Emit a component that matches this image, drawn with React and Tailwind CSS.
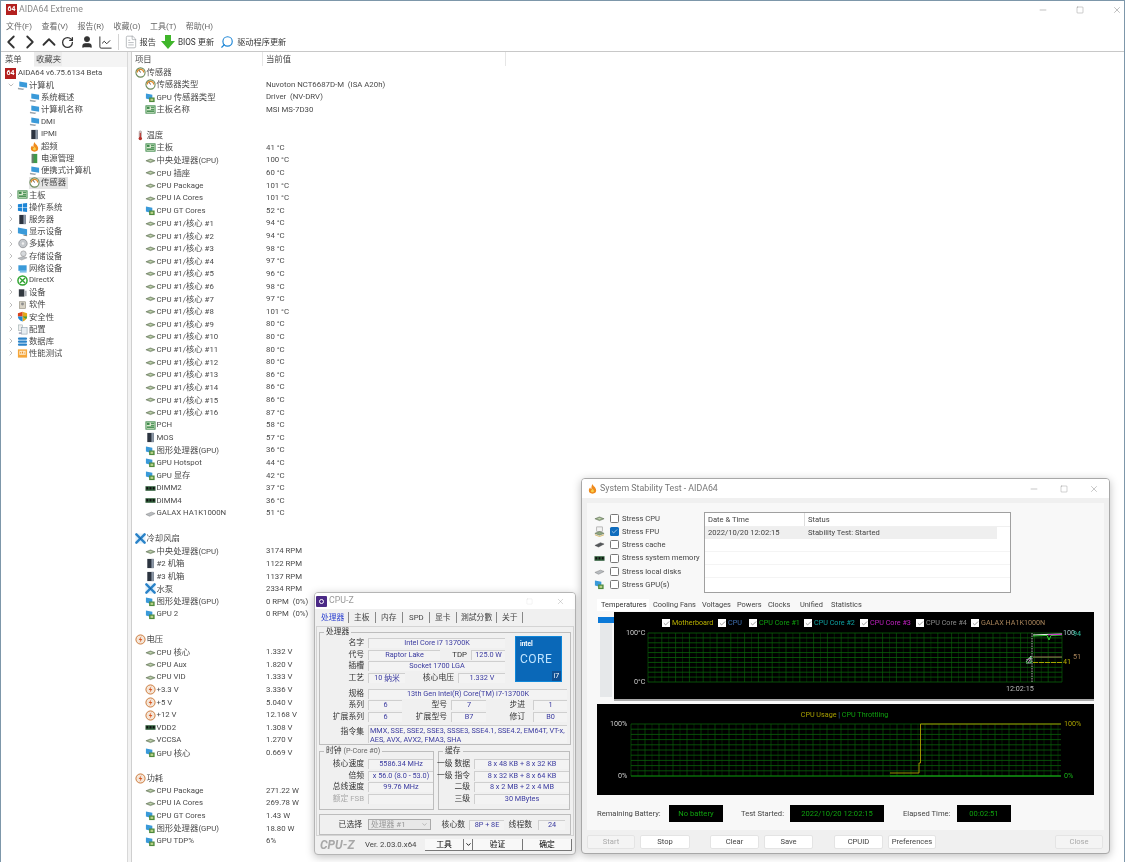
import React from "react";
import { ChevronLeft, ChevronRight, ChevronUp, ChevronDown, RotateCw, User, ChartLine, Minus, Square, X, Check, FileText, Search } from "lucide-react";

// small app icons
const Svg = ({ children }) => (
  <svg viewBox="0 0 12 12" className="w-[11px] h-[11px] shrink-0">
    {children}
  </svg>
);
const Gauge = () => (
  <Svg>
    <circle cx="6" cy="6" r="5" fill="#fff" stroke="#6b8a5a" strokeWidth="1.2" />
    <path d="M2.5 6a3.5 3.5 0 0 1 7 0" fill="none" stroke="#e08a2a" strokeWidth="1.4" />
    <path d="M6 6L4.5 3.5" stroke="#444" strokeWidth="1" />
  </Svg>
);
const Cpu = () => (
  <Svg>
    <path d="M1 6.3L6 4.3L11 6.3L6 8.3Z" fill="#8fa77f" stroke="#5b6b52" strokeWidth="0.6" />
    <path d="M3.5 6.3L6 5.4L8.5 6.3L6 7.2Z" fill="#c9d8b8" />
  </Svg>
);
const Fpu = () => (
  <Svg>
    <rect x="3" y="1" width="6" height="5" fill="#f2f2f2" stroke="#8a8a8a" strokeWidth="0.6" />
    <path d="M1 8L6 6L11 8L6 10Z" fill="#8fa77f" stroke="#5b6b52" strokeWidth="0.6" />
    <path d="M1 9.5L6 11.500L11 9.5" fill="none" stroke="#c9a43a" strokeWidth="0.8" />
  </Svg>
);
const Cache = () => (
  <Svg>
    <path d="M1 7L7 4L11 5.5L5 8.8Z" fill="#55595c" stroke="#333" strokeWidth="0.4" />
  </Svg>
);
const Gpu = () => (
  <Svg>
    <path d="M1 1.5L8 3V9L1 7Z" fill="#3a9ad9" />
    <rect x="4.5" y="6" width="6" height="5" fill="#4f8a3c" />
    <rect x="6" y="7.3" width="3" height="2.4" fill="#b9d28a" />
  </Svg>
);
const Board = () => (
  <Svg>
    <rect x="1" y="2" width="10" height="8" fill="#dcebd2" stroke="#3d8a4a" />
    <rect x="2" y="3" width="3" height="2.4" fill="#3d8a4a" />
    <rect x="6.5" y="3" width="3.5" height="1.2" fill="#3d8a4a" />
    <rect x="6.5" y="5.2" width="3.5" height="1.2" fill="#3d8a4a" />
    <rect x="2" y="7" width="8" height="1.6" fill="#3d8a4a" />
  </Svg>
);
const Thermo = () => (
  <Svg>
    <rect x="4.6" y="1" width="2.4" height="7" rx="1" fill="#d9d9d9" stroke="#8a5a5a" strokeWidth="0.5" />
    <rect x="5.2" y="3" width="1.2" height="6" fill="#b5302a" />
    <circle cx="5.8" cy="9.2" r="1.9" fill="#b5302a" />
  </Svg>
);
const Fan = () => (
  <Svg>
    <rect x="0.5" y="0.5" width="11" height="11" rx="1.5" fill="#e3f1fb" />
    <path d="M1.5 1.5L5 5M10.5 1.5L7 5M1.5 10.5L5 7M10.5 10.5L7 7" stroke="#2a83c9" strokeWidth="2.6" strokeLinecap="round" />
    <circle cx="6" cy="6" r="1" fill="#1b5f99" />
  </Svg>
);
const Volt = () => (
  <Svg>
    <circle cx="6" cy="6" r="5" fill="#f4e6d8" stroke="#c9722e" />
    <path d="M7 2.5L4 6.5H6L5 9.5L8 5.5H6Z" fill="#d9541e" />
  </Svg>
);
const Tower = () => (
  <Svg>
    <rect x="2.5" y="1" width="7" height="10" fill="#2c3440" />
    <rect x="7" y="1" width="2.5" height="10" fill="#8d99a8" />
  </Svg>
);
const Dimm = () => (
  <Svg>
    <rect x="0.5" y="3.5" width="11" height="5" fill="#2f5d3a" />
    <rect x="1.5" y="4.5" width="2" height="2.5" fill="#111" />
    <rect x="5" y="4.5" width="2" height="2.5" fill="#111" />
    <rect x="8.5" y="4.5" width="2" height="2.5" fill="#111" />
  </Svg>
);
const Hdd = () => (
  <Svg>
    <path d="M1 7L7 4.5L11 6L5 9Z" fill="#b8bcc0" stroke="#777" strokeWidth="0.5" />
  </Svg>
);
const Pc = () => (
  <Svg>
    <path d="M2.5 1.5L11 3V8.5L2.5 7Z" fill="#3a9ad9" />
    <path d="M1 8.5L8 9.5L6.5 11L1 10Z" fill="#9aa3ab" />
  </Svg>
);
const Flame = () => (
  <Svg>
    <path d="M6 1C6.5 3.5 10 4.5 10 8A4 3.6 0 0 1 2 8C2 6.5 2.8 5.5 3.5 4.8C3.8 6 4.4 6.4 5 6.4C4.6 4.6 5 2.6 6 1Z" fill="#ef8a1d" />
    <path d="M6 6C6.4 7.2 7.6 7.6 7.6 9A1.7 1.6 0 0 1 4.3 9C4.3 8 5.6 7.4 6 6Z" fill="#f7d14a" />
  </Svg>
);
const Power = () => (
  <Svg>
    <rect x="3" y="1" width="6" height="10" fill="#3f9a4a" />
    <rect x="3" y="1" width="2" height="10" fill="#6d7a70" />
  </Svg>
);
const Win = () => (
  <Svg>
    <path d="M1 2.5L5.5 1.8V5.7H1ZM6.3 1.7L11 1V5.7H6.3ZM1 6.4H5.5V10.3L1 9.6ZM6.3 6.4H11V11L6.3 10.3Z" fill="#1e86d6" />
  </Svg>
);
const Mon = () => (
  <Svg>
    <path d="M1 1.5L11 3.5V10L1 8Z" fill="#3a9ad9" />
    <path d="M7 10L11 10.6" stroke="#777" />
  </Svg>
);
const Media = () => (
  <Svg>
    <circle cx="6.5" cy="6" r="4.6" fill="#c4c8cc" stroke="#7b7f84" strokeWidth="0.7" />
    <circle cx="6.5" cy="6" r="1.3" fill="#f0f0f0" />
  </Svg>
);
const Store = () => (
  <Svg>
    <circle cx="7" cy="4" r="3" fill="#d6d9dc" stroke="#888" strokeWidth="0.6" />
    <path d="M1 9L7 7L11 8.5L5 11Z" fill="#b8bcc0" stroke="#777" strokeWidth="0.4" />
  </Svg>
);
const Net = () => (
  <Svg>
    <rect x="1.5" y="2.5" width="9" height="6" fill="#3a9ad9" />
    <rect x="3" y="8.5" width="7.5" height="2" fill="#7ec1e8" />
  </Svg>
);
const Xbox = () => (
  <Svg>
    <circle cx="6" cy="6" r="5" fill="#fff" stroke="#2fa32f" strokeWidth="1.6" />
    <path d="M3.2 3.2L8.8 8.8M8.8 3.2L3.2 8.8" stroke="#2fa32f" strokeWidth="1.5" />
  </Svg>
);
const Device = () => (
  <Svg>
    <rect x="2" y="2.5" width="6" height="8" fill="#333a40" />
    <rect x="8" y="4" width="2.5" height="6" fill="#a9aeb3" />
  </Svg>
);
const Soft = () => (
  <Svg>
    <rect x="2.5" y="3" width="7" height="7.5" fill="#d8d3c6" stroke="#8b8778" strokeWidth="0.6" />
    <circle cx="6" cy="5.5" r="1.6" fill="#8f8f8f" />
  </Svg>
);
const Shield = () => (
  <Svg>
    <path d="M6 0.8L11 2.5V6C11 8.6 9 10.5 6 11.5Z" fill="#e2a81c" />
    <path d="M6 0.8L1 2.5V6H6Z" fill="#d9431e" />
    <path d="M1 6C1 8.6 3 10.5 6 11.5V6Z" fill="#1e86d6" />
    <path d="M6 6H11C11 7 10.6 8 10 8.8L6 6Z" fill="#3ea13e" />
  </Svg>
);
const Conf = () => (
  <Svg>
    <rect x="1.5" y="1" width="4.5" height="6" fill="#eee" stroke="#9aa" strokeWidth="0.6" />
    <rect x="5" y="4" width="6" height="7" fill="#e8eef2" stroke="#8a9aa5" strokeWidth="0.6" />
    <path d="M2 9h3v2H2z" fill="#aab" />
  </Svg>
);
const Db = () => (
  <Svg>
    <rect x="1" y="1.5" width="10" height="2.6" rx="1.2" fill="#2a83c9" />
    <rect x="1" y="4.8" width="10" height="2.6" rx="1.2" fill="#2a83c9" />
    <rect x="1" y="8.1" width="10" height="2.6" rx="1.2" fill="#2a83c9" />
  </Svg>
);
const Bench = () => (
  <Svg>
    <rect x="1" y="1.5" width="10" height="9" fill="#f5a63a" />
    <rect x="2.5" y="3" width="7" height="4.5" fill="#fde6c2" />
    <path d="M4 6V4.5M6 6V4M8 6V5" stroke="#e2851a" />
  </Svg>
);
const Logo64 = ({ cls }) => (
  <div className={"flex items-center justify-center bg-[#b3201f] text-white font-bold shrink-0 " + cls}>64</div>
);

// latin runs are narrower than the CJK ones in the original font
const T = ({ s }) =>
  s.split(/([\u4e00-\u9fff]+)/).map((part, i) =>
    /[\u4e00-\u9fff]/.test(part) ? (
      <span key={i} className="text-[8.4px]">{part}</span>
    ) : (
      <span key={i}>{part}</span>
    )
  );

const tree = [
  { d: 1, open: true, I: Pc, t: "计算机" },
  { d: 2, I: Pc, t: "系统概述" },
  { d: 2, I: Pc, t: "计算机名称" },
  { d: 2, I: Pc, t: "DMI" },
  { d: 2, I: Tower, t: "IPMI" },
  { d: 2, I: Flame, t: "超频" },
  { d: 2, I: Power, t: "电源管理" },
  { d: 2, I: Pc, t: "便携式计算机" },
  { d: 2, I: Gauge, t: "传感器", sel: true },
  { d: 1, I: Board, t: "主板" },
  { d: 1, I: Win, t: "操作系统" },
  { d: 1, I: Tower, t: "服务器" },
  { d: 1, I: Mon, t: "显示设备" },
  { d: 1, I: Media, t: "多媒体" },
  { d: 1, I: Store, t: "存储设备" },
  { d: 1, I: Net, t: "网络设备" },
  { d: 1, I: Xbox, t: "DirectX" },
  { d: 1, I: Device, t: "设备" },
  { d: 1, I: Soft, t: "软件" },
  { d: 1, I: Shield, t: "安全性" },
  { d: 1, I: Conf, t: "配置" },
  { d: 1, I: Db, t: "数据库" },
  { d: 1, I: Bench, t: "性能测试" },
];

const coreTemps = [94, 94, 98, 97, 96, 98, 97, 101, 80, 80, 80, 80, 86, 86, 86, 87];

const rows = [
  { head: true, I: Gauge, t: "传感器" },
  { I: Gauge, t: "传感器类型", v: "Nuvoton NCT6687D-M  (ISA A20h)" },
  { I: Gpu, t: "GPU 传感器类型", v: "Driver  (NV-DRV)" },
  { I: Board, t: "主板名称", v: "MSI MS-7D30" },
  null,
  { head: true, I: Thermo, t: "温度" },
  { I: Board, t: "主板", v: "41 °C" },
  { I: Cpu, t: "中央处理器(CPU)", v: "100 °C" },
  { I: Cpu, t: "CPU 插座", v: "60 °C" },
  { I: Cpu, t: "CPU Package", v: "101 °C" },
  { I: Cpu, t: "CPU IA Cores", v: "101 °C" },
  { I: Gpu, t: "CPU GT Cores", v: "52 °C" },
  ...coreTemps.map((c, i) => ({ I: Cpu, t: `CPU #1/核心 #${i + 1}`, v: `${c} °C` })),
  { I: Board, t: "PCH", v: "58 °C" },
  { I: Tower, t: "MOS", v: "57 °C" },
  { I: Gpu, t: "图形处理器(GPU)", v: "36 °C" },
  { I: Gpu, t: "GPU Hotspot", v: "44 °C" },
  { I: Gpu, t: "GPU 显存", v: "42 °C" },
  { I: Dimm, t: "DIMM2", v: "37 °C" },
  { I: Dimm, t: "DIMM4", v: "36 °C" },
  { I: Hdd, t: "GALAX HA1K1000N", v: "51 °C" },
  null,
  { head: true, I: Fan, t: "冷却风扇" },
  { I: Cpu, t: "中央处理器(CPU)", v: "3174 RPM" },
  { I: Tower, t: "#2 机箱", v: "1122 RPM" },
  { I: Tower, t: "#3 机箱", v: "1137 RPM" },
  { I: Fan, t: "水泵", v: "2334 RPM" },
  { I: Gpu, t: "图形处理器(GPU)", v: "0 RPM  (0%)" },
  { I: Gpu, t: "GPU 2", v: "0 RPM  (0%)" },
  null,
  { head: true, I: Volt, t: "电压" },
  { I: Cpu, t: "CPU 核心", v: "1.332 V" },
  { I: Cpu, t: "CPU Aux", v: "1.820 V" },
  { I: Cpu, t: "CPU VID", v: "1.333 V" },
  { I: Volt, t: "+3.3 V", v: "3.336 V" },
  { I: Volt, t: "+5 V", v: "5.040 V" },
  { I: Volt, t: "+12 V", v: "12.168 V" },
  { I: Dimm, t: "VDD2", v: "1.308 V" },
  { I: Cpu, t: "VCCSA", v: "1.270 V" },
  { I: Gpu, t: "GPU 核心", v: "0.669 V" },
  null,
  { head: true, I: Volt, t: "功耗" },
  { I: Cpu, t: "CPU Package", v: "271.22 W" },
  { I: Cpu, t: "CPU IA Cores", v: "269.78 W" },
  { I: Gpu, t: "CPU GT Cores", v: "1.43 W" },
  { I: Gpu, t: "图形处理器(GPU)", v: "18.80 W" },
  { I: Gpu, t: "GPU TDP%", v: "6%" },
];

function MainWindow() {
  return (
    <div className="w-full h-full flex flex-col border-l border-t border-r border-[#7d97aa] bg-white text-[#4a4a4a]">
      <div className="h-[17px] flex items-center shrink-0 pl-[5px]">
        <Logo64 cls="w-[11px] h-[11px] text-[7px]" />
        <span className="ml-[2px] text-[#8a8a8a] text-[8.8px]">AIDA64 Extreme</span>
        <div className="ml-auto flex items-center gap-[28px] mr-[2px] text-[#666]">
          <Minus size={10} strokeWidth={1} />
          <Square size={8} strokeWidth={1} />
          <X size={10} strokeWidth={1} />
        </div>
      </div>
      <div className="h-[15px] flex items-center shrink-0 pl-[5px] gap-[9.5px] text-[#666] text-[8px] pt-[3px]">
        <span>文件(F)</span>
        <span>查看(V)</span>
        <span>报告(R)</span>
        <span>收藏(O)</span>
        <span>工具(T)</span>
        <span>帮助(H)</span>
      </div>
      <div className="h-[19px] flex items-center shrink-0 border-b border-[#c8c8c8] text-[#333]">
        <ChevronLeft size={22} strokeWidth={2} className="-ml-[1px] -mr-[3px] shrink-0" />
        <ChevronRight size={22} strokeWidth={2} className="-mr-[3px] shrink-0" />
        <ChevronUp size={22} strokeWidth={2} className="-mr-[3px] shrink-0" />
        <RotateCw size={13} strokeWidth={2.4} className="ml-[3.5px] shrink-0" />
        <User size={14} strokeWidth={2} fill="#333" className="ml-[6px] shrink-0" />
        <ChartLine size={15} strokeWidth={1.6} className="ml-[4px] shrink-0" />
        <div className="w-px h-[16px] bg-[#d4d4d4] ml-[5px]" />
        <FileText size={14} strokeWidth={1} className="text-[#8a8f94] ml-[5px] shrink-0" />
        <span className="text-[8.2px] ml-[2px]">报告</span>
        <svg viewBox="0 0 14 14" className="w-[14px] h-[14px] ml-[5px] shrink-0">
          <path d="M4 0H10V6H14L7 14L0 6H4Z" fill="#3fb52a" />
        </svg>
        <span className="text-[8.2px] ml-[3px]">BIOS 更新</span>
        <Search size={14} strokeWidth={2} className="text-[#1e86d6] -scale-x-100 ml-[6px] shrink-0" />
        <span className="text-[8.2px] ml-[3px]">驱动程序更新</span>
      </div>
      <div className="flex-1 flex min-h-0">
        <div className="w-[127px] shrink-0 border-r border-[#d8d8d8] flex flex-col text-[7.8px]">
          <div className="h-[15px] flex items-end bg-[#f4f4f4] shrink-0 text-[8.4px]">
            <div className="h-[15px] w-[33px] bg-white flex items-center pl-[4px]">菜单</div>
            <div className="h-[14px] w-[28px] mb-[1px] bg-[#ececec] flex items-center pl-[2px]">收藏夹</div>
          </div>
          <div className="h-[12.2px] flex items-center pl-[4px]">
            <Logo64 cls="w-[11px] h-[11px] text-[7px]" />
            <span className="ml-[2px]">AIDA64 v6.75.6134 Beta</span>
          </div>
          {tree.map((n, i) => (
            <div key={i} className="h-[12.2px] flex items-center">
              {n.d === 1 ? (
                <div className="w-[16px] flex justify-end pr-[2px] text-[#9a9a9a]">
                  {n.open ? <ChevronDown size={8} /> : <ChevronRight size={8} />}
                </div>
              ) : (
                <div className="w-[28px]" />
              )}
              <div className={n.sel ? "flex items-center bg-[#e4e4e4] pr-[2px] h-[12px]" : "flex items-center"}>
                <n.I />
                <span className="ml-[1px]"><T s={n.t} /></span>
              </div>
            </div>
          ))}
        </div>
        <div className="w-[3px] bg-[#f2f2f2] shrink-0" />
        <div className="flex-1 border-l border-[#cfcfcf] text-[7.8px] min-w-0">
          <div className="h-[13.7px] flex items-center text-[8.4px]">
            <div className="w-[131px] pl-[3px] border-r border-[#e6e6e6] h-full flex items-center">项目</div>
            <div className="w-[243px] pl-[3px] border-r border-[#e6e6e6] h-full flex items-center">当前值</div>
          </div>
          {rows.map((r, i) =>
            r === null ? (
              <div key={i} className="h-[12.61px]" />
            ) : (
              <div key={i} className="h-[12.61px] flex items-center">
                <div className={r.head ? "w-[134px] shrink-0 flex items-center pl-[3px]" : "w-[134px] shrink-0 flex items-center pl-[13px]"}>
                  <r.I />
                  <span className="ml-[0.5px]"><T s={r.t} /></span>
                </div>
                <span className="whitespace-pre">{r.v}</span>
              </div>
            )
          )}
        </div>
      </div>
    </div>
  );
}

// CPU-Z parts
const Lbl = ({ className, children }) => (
  <div className={"flex justify-end whitespace-nowrap shrink-0 text-[#333] " + className}>{children}</div>
);
const Fld = ({ className, children }) => (
  <div className={"ml-[4px] h-[10px] shrink-0 flex items-center justify-center whitespace-nowrap bg-[#f3f3f3] border-t border-l border-[#cfcfcf] text-[#3b3ba0] text-[7.3px] " + className}>
    {children}
  </div>
);
const Group = ({ className, label, children }) => (
  <div className={"relative border border-[#bdbdbd] " + className}>
    <div className="absolute -top-[6px] left-[4px] bg-[#f0f0f0] px-[2px] text-[#333] leading-[10px]">{label}</div>
    {children}
  </div>
);
const R = ({ children }) => <div className="flex items-center h-[11.7px]">{children}</div>;

function CpuZ() {
  return (
    <div className="absolute left-[314px] top-[592px] w-[262px] h-[263px] rounded-[4px] border border-[#b5b5b5] bg-[#f0f0f0] shadow-[0_2px_8px_rgba(0,0,0,0.25)] flex flex-col text-[7.8px] overflow-hidden">
      <div className="h-[16px] bg-white flex items-center pl-[1px] shrink-0">
        <div className="w-[11px] h-[11px] bg-[#4b2a86] rounded-[1px] flex items-center justify-center">
          <div className="w-[5px] h-[5px] rounded-full border border-white" />
        </div>
        <span className="ml-[2px] text-[#9a9a9a] text-[8.8px]">CPU-Z</span>
        <div className="ml-auto flex items-center gap-[23px] mr-[10px] text-[#9a9a9a]">
          <Square size={7} strokeWidth={0.8} className="text-[#d0d0d0]" />
          <X size={9} strokeWidth={1} />
        </div>
      </div>
      <div className="h-[17px] flex items-center pl-[6px] shrink-0 text-[#444]">
        <span className="text-[#2a3fd0] w-[28px]">处理器</span>
        <span className="border-l border-[#888] w-[27px] pl-[5px] ml-[-1px]">主板</span>
        <span className="border-l border-[#888] w-[27px] pl-[5px]">内存</span>
        <span className="border-l border-[#888] w-[27px] pl-[6px]">SPD</span>
        <span className="border-l border-[#888] w-[27px] pl-[5px]">显卡</span>
        <span className="border-l border-[#888] w-[40px] pl-[4px]">測試分數</span>
        <span className="border-l border-[#888] w-[27px] pl-[5px] border-r">关于</span>
      </div>
      <div className="mx-[1px] w-[258px] h-[210px] border border-[#d4d4d4] shrink-0 px-[2px] pt-[5px] flex flex-col">
        <Group className="w-[252px] h-[113px] pt-[4px] shrink-0" label="处理器">
          <div className="flex">
            <div className="w-[186px] shrink-0">
              <R>
                <Lbl className="w-[44px]">名字</Lbl>
                <Fld className="w-[137px]">Intel Core i7 13700K</Fld>
              </R>
              <R>
                <Lbl className="w-[44px]">代号</Lbl>
                <Fld className="w-[72px]">Raptor Lake</Fld>
                <Lbl className="w-[27px]">TDP</Lbl>
                <Fld className="w-[34px]">125.0 W</Fld>
              </R>
              <R>
                <Lbl className="w-[44px]">插槽</Lbl>
                <Fld className="w-[137px]">Socket 1700 LGA</Fld>
              </R>
              <R>
                <Lbl className="w-[44px]">工艺</Lbl>
                <Fld className="w-[37px]">10&nbsp;<span className="text-[7.8px]">纳米</span></Fld>
                <Lbl className="w-[49px]">核心电压</Lbl>
                <Fld className="w-[47px]">1.332 V</Fld>
              </R>
            </div>
            <div className="ml-[9px] -mt-[1px] w-[47px] h-[46px] bg-[#0a68b8] border border-[#0f86d8] flex flex-col text-white pl-[4px] pt-[3px] relative">
              <span className="text-[6.5px] font-bold leading-[8px]">intel</span>
              <span className="text-[12px] leading-[18px] tracking-[0.5px] mt-[2px] text-[#bfe4ff]">CORE</span>
              <span className="absolute right-0 bottom-0 w-[9px] h-[10px] bg-[#0f4f92] text-[7px] text-center leading-[10px]">i7</span>
            </div>
          </div>
          <div className="mt-[4px]">
            <R>
              <Lbl className="w-[44px]">规格</Lbl>
              <Fld className="w-[199px]">13th Gen Intel(R) Core(TM) i7-13700K</Fld>
            </R>
            <R>
              <Lbl className="w-[44px]">系列</Lbl>
              <Fld className="w-[34px]">6</Fld>
              <Lbl className="w-[45px]">型号</Lbl>
              <Fld className="w-[35px]">7</Fld>
              <Lbl className="w-[39px]">步进</Lbl>
              <Fld className="w-[34px] ml-[8px]">1</Fld>
            </R>
            <R>
              <Lbl className="w-[44px]">扩展系列</Lbl>
              <Fld className="w-[34px]">6</Fld>
              <Lbl className="w-[45px]">扩展型号</Lbl>
              <Fld className="w-[35px]">B7</Fld>
              <Lbl className="w-[39px]">修订</Lbl>
              <Fld className="w-[34px] ml-[8px]">B0</Fld>
            </R>
          </div>
          <div className="flex mt-[2px]">
            <Lbl className="w-[44px] pt-[1px]">指令集</Lbl>
            <div className="ml-[4px] w-[199px] h-[18px] bg-[#f3f3f3] border-t border-l border-[#cfcfcf] text-[#3b3ba0] text-[7.3px] leading-[9px] pl-[1px]">
              MMX, SSE, SSE2, SSE3, SSSE3, SSE4.1, SSE4.2, EM64T, VT-x, AES, AVX, AVX2, FMA3, SHA
            </div>
          </div>
        </Group>
        <div className="flex mt-[6px] gap-[4px] shrink-0">
          <Group className="w-[115px] h-[59px] pt-[6px]" label={<>时钟 <span className="text-[#666] text-[7.2px]">(P-Core #0)</span></>}>
            <R>
              <Lbl className="w-[44px]">核心速度</Lbl>
              <Fld className="w-[65px]">5586.34 MHz</Fld>
            </R>
            <R>
              <Lbl className="w-[44px]">倍频</Lbl>
              <Fld className="w-[65px]">x 56.0 (8.0 - 53.0)</Fld>
            </R>
            <R>
              <Lbl className="w-[44px]">总线速度</Lbl>
              <Fld className="w-[65px]">99.76 MHz</Fld>
            </R>
            <R>
              <Lbl className="w-[44px] !text-[#aaa]">额定 FSB</Lbl>
              <Fld className="w-[65px]"></Fld>
            </R>
          </Group>
          <Group className="w-[132px] h-[59px] pt-[6px]" label="缓存">
            <R>
              <Lbl className="w-[31px]">一级 数据</Lbl>
              <Fld className="w-[95px]">8 x 48 KB + 8 x 32 KB</Fld>
            </R>
            <R>
              <Lbl className="w-[31px]">一级 指令</Lbl>
              <Fld className="w-[95px]">8 x 32 KB + 8 x 64 KB</Fld>
            </R>
            <R>
              <Lbl className="w-[31px]">二级</Lbl>
              <Fld className="w-[95px]">8 x 2 MB + 2 x 4 MB</Fld>
            </R>
            <R>
              <Lbl className="w-[31px]">三级</Lbl>
              <Fld className="w-[95px]">30 MBytes</Fld>
            </R>
          </Group>
        </div>
        <div className="mt-[4px] w-[252px] h-[21px] border border-[#bdbdbd] flex items-center shrink-0">
          <Lbl className="w-[42px]">已选择</Lbl>
          <div className="ml-[6px] w-[63px] h-[11px] bg-[#e8e8e8] border border-[#aaa] flex items-center justify-between px-[2px] text-[#999]">
            处理器 #1
            <ChevronDown size={7} />
          </div>
          <Lbl className="w-[34px]">核心数</Lbl>
          <Fld className="w-[35px]">8P + 8E</Fld>
          <Lbl className="w-[28px]">线程数</Lbl>
          <Fld className="w-[27px] ml-[6px]">24</Fld>
        </div>
      </div>
      <div className="flex-1 flex items-center pl-[5px]">
        <span className="w-[45px] italic font-bold text-[#a8a8a8] text-[12px]">CPU-Z</span>
        <span className="w-[60px] text-[#444] text-[7.8px] whitespace-nowrap">Ver. 2.03.0.x64</span>
        <div className="w-[39px] h-[12px] bg-[#f8f8f8] border-r border-b border-[#777] flex items-center justify-center">工具</div>
        <div className="w-[9px] h-[12px] bg-[#f8f8f8] border-r border-b border-[#777] flex items-center justify-center">
          <ChevronDown size={7} strokeWidth={3} />
        </div>
        <div className="w-[50px] h-[12px] bg-[#f8f8f8] border-r border-b border-[#777] flex items-center justify-center">验证</div>
        <div className="w-[49px] h-[12px] bg-[#f8f8f8] border-r border-b border-[#777] flex items-center justify-center">确定</div>
      </div>
    </div>
  );
}

// stability test parts
const stress = [
  { I: Cpu, t: "Stress CPU" },
  { I: Fpu, t: "Stress FPU", on: true },
  { I: Cache, t: "Stress cache" },
  { I: Dimm, t: "Stress system memory" },
  { I: Hdd, t: "Stress local disks" },
  { I: Gpu, t: "Stress GPU(s)" },
];

const legend = [
  { t: "Motherboard", c: "text-[#b9b000]", w: "w-[56px]" },
  { t: "CPU", c: "text-[#3f6fb0]", w: "w-[31px]" },
  { t: "CPU Core #1", c: "text-[#0fa00f]", w: "w-[55px]" },
  { t: "CPU Core #2", c: "text-[#0ea0a0]", w: "w-[56px]" },
  { t: "CPU Core #3", c: "text-[#c020c0]", w: "w-[56px]" },
  { t: "CPU Core #4", c: "text-[#8a8a8a]", w: "w-[55px]" },
  { t: "GALAX HA1K1000N", c: "text-[#a8845a]", w: "w-[72px]" },
];

const range = (a, b, s) => {
  const out = [];
  for (let v = a; v <= b + 0.01; v += s) out.push(v);
  return out;
};

const Grid = ({ x0, x1, y0, y1, dx }) => (
  <g>
    {range(x0 + dx / 2, x1, dx).map((x) => (
      <line key={x} x1={x} x2={x} y1={y0} y2={y1} stroke="#063a06" strokeWidth="0.6" />
    ))}
    {range(x0, x1, dx).map((x) => (
      <line key={x} x1={x} x2={x} y1={y0} y2={y1} stroke="#0a5a0a" strokeWidth="0.7" />
    ))}
    {range(y0, y1, (y1 - y0) / 10).map((y) => (
      <line key={y} x1={x0} x2={x1} y1={y} y2={y} stroke="#0a620a" strokeWidth="0.8" />
    ))}
  </g>
);

function TempChart() {
  return (
    <div className="relative flex-1 h-[89px] bg-black border-b-2 border-[#aaa] text-[7.2px]">
      <svg viewBox="0 0 480 87" className="absolute inset-0 w-full h-full">
        <Grid x0={34} x1={448} y0={21} y1={70} dx={13.8} />
        <line x1="418" x2="418" y1="21" y2="70" stroke="#ddd" strokeWidth="0.8" strokeDasharray="1.5 1" />
        <path d="M412 50L417 44V51H412" fill="none" stroke="#9fa" strokeWidth="0.8" />
        <path d="M412 48L417 46L414 51" fill="none" stroke="#d9d" strokeWidth="0.8" />
        <path d="M419 23L430 22.500L448 22" fill="none" stroke="#e8e8e8" strokeWidth="1" />
        <path d="M419 24L433 23.500L435 28L437 23.500L448 23" fill="none" stroke="#2fd02f" strokeWidth="1" />
        <path d="M434 22.800L448 22.400" fill="none" stroke="#d02fd0" strokeWidth="1" />
        <path d="M419 45L448 45" stroke="#a8845a" strokeWidth="0.9" />
        <path d="M419 50.500L448 50.500" stroke="#b9b000" strokeWidth="0.9" strokeDasharray="5 1" />
      </svg>
      <div className="relative flex items-center pl-[48px] pt-[6px]">
        {legend.map((l) => (
          <div key={l.t} className={"flex items-center shrink-0 " + l.w}>
            <div className="w-[8px] h-[8px] bg-white flex items-center justify-center shrink-0">
              <Check size={7} strokeWidth={2} className="text-[#555]" />
            </div>
            <span className={"ml-[2px] whitespace-nowrap " + l.c}>{l.t}</span>
          </div>
        ))}
      </div>
      <span className="absolute left-[12px] top-[16px] text-[#ccc]">100°C</span>
      <span className="absolute left-[20px] top-[65px] text-[#ccc]">0°C</span>
      <span className="absolute left-[392px] top-[72px] text-[#bbb]">12:02:15</span>
      <span className="absolute left-[449px] top-[16px] text-[#9fc5c5]">100</span>
      <span className="absolute left-[459px] top-[17px] text-[#2fc0a0]">94</span>
      <span className="absolute left-[459px] top-[40px] text-[#a8845a]">51</span>
      <span className="absolute left-[449px] top-[45px] text-[#b9b000]">41</span>
    </div>
  );
}

function UsageChart() {
  return (
    <div className="relative w-[497px] h-[91px] bg-black text-[7.2px] mt-[3px] shrink-0">
      <svg viewBox="0 0 497 91" className="absolute inset-0 w-full h-full">
        <Grid x0={34} x1={464} y0={20} y1={72} dx={14} />
        <path d="M293 69H322V59H323.500V20H464" fill="none" stroke="#b0a000" strokeWidth="0.9" />
        <path d="M293 72H464" stroke="#18c018" strokeWidth="1" />
        <path d="M34 72H293" stroke="#0a8a0a" strokeWidth="0.8" />
      </svg>
      <div className="relative text-center pt-[6px] -ml-[2px]">
        <span className="text-[#a8a000]">CPU Usage</span>
        <span className="text-[#3f6fb0]"> | </span>
        <span className="text-[#0fa00f]">CPU Throttling</span>
      </div>
      <span className="absolute left-[13px] top-[15px] text-[#ccc]">100%</span>
      <span className="absolute left-[21px] top-[67px] text-[#ccc]">0%</span>
      <span className="absolute left-[467px] top-[15px] text-[#a8a000]">100%</span>
      <span className="absolute left-[467px] top-[67px] text-[#18b018]">0%</span>
    </div>
  );
}

const Btn = ({ className, children, off }) => (
  <div className={"h-[14px] rounded-[2px] flex items-center justify-center shrink-0 border border-[#e4e4e4] " + (off ? "bg-[#f4f4f4] text-[#aaa] " : "bg-white text-[#444] ") + className}>
    {children}
  </div>
);

function Stability() {
  return (
    <div className="absolute left-[581px] top-[478px] w-[529px] h-[376px] rounded-[4px] border border-[#a8a8a8] bg-[#f0f0f0] shadow-[0_2px_8px_rgba(0,0,0,0.25)] flex flex-col text-[7.6px] text-[#444] overflow-hidden">
      <div className="h-[19px] bg-white flex items-center pl-[5px] shrink-0">
        <Flame />
        <span className="ml-[2px] text-[#777] text-[8.8px]">System Stability Test - AIDA64</span>
        <div className="ml-auto flex items-center gap-[21px] mr-[10px] text-[#777]">
          <Minus size={10} strokeWidth={1} />
          <Square size={8} strokeWidth={1} />
          <X size={10} strokeWidth={1} />
        </div>
      </div>
      <div className="mx-[5px] mt-[5px] w-[517px] h-[327px] bg-[#f8f8f8] shrink-0 pl-[10px] flex flex-col">
        <div className="flex pt-[9px] h-[90px] shrink-0">
          <div className="w-[110px] shrink-0 -ml-[3px]">
            {stress.map((s) => (
              <div key={s.t} className="h-[13.2px] flex items-center">
                <s.I />
                <div className={s.on ? "ml-[5px] w-[9px] h-[9px] shrink-0 rounded-[1.5px] bg-[#0f6cbd] flex items-center justify-center" : "ml-[5px] w-[9px] h-[9px] shrink-0 rounded-[1.5px] bg-white border border-[#777]"}>
                  {s.on && <Check size={7} strokeWidth={2} className="text-white" />}
                </div>
                <span className="ml-[3px] whitespace-nowrap">{s.t}</span>
              </div>
            ))}
          </div>
          <div className="w-[307px] h-[81px] border border-[#a0a0a0] bg-white shrink-0">
            <div className="h-[14px] flex items-center border-b border-[#f0f0f0]">
              <div className="w-[100px] pl-[3px] h-full flex items-center border-r border-[#ddd]">Date & Time</div>
              <div className="pl-[3px]">Status</div>
            </div>
            <div className="w-[292px] h-[12px] bg-[#efefef] flex items-center">
              <div className="w-[100px] pl-[3px]">2022/10/20 12:02:15</div>
              <div className="pl-[3px]">Stability Test: Started</div>
            </div>
            <div className="h-[13px] border-b border-[#f4f4f4]" />
            <div className="h-[13px] border-b border-[#f4f4f4]" />
            <div className="h-[13px] border-b border-[#f4f4f4]" />
          </div>
        </div>
        <div className="h-[19px] flex items-center shrink-0 pb-[2px] pt-[6px] text-[7.4px]">
          <span className="bg-white h-[12px] flex items-center w-[52px] pl-[4px] text-[#333]">Temperatures</span>
          <span className="w-[49px] ml-[4px]">Cooling Fans</span>
          <span className="w-[35px]">Voltages</span>
          <span className="w-[31px]">Powers</span>
          <span className="w-[32px]">Clocks</span>
          <span className="w-[31px]">Unified</span>
          <span>Statistics</span>
        </div>
        <div className="flex w-[497px] shrink-0">
          <div className="w-[17px] shrink-0 pt-[5px] pl-[1px]">
            <div className="h-[6px] bg-[#0a78d7]" />
            <div className="h-[74px] mx-[2px] bg-[#e6e8ea]" />
          </div>
          <TempChart />
        </div>
        <UsageChart />
        <div className="flex items-center h-[17px] mt-[10px] shrink-0">
          <span className="w-[72px] whitespace-nowrap">Remaining Battery:</span>
          <div className="w-[54px] h-[17px] bg-black text-[#0fa00f] flex items-center justify-center">No battery</div>
          <span className="ml-[18px] w-[49px] whitespace-nowrap">Test Started:</span>
          <div className="w-[94px] h-[17px] bg-black text-[#0fa00f] flex items-center justify-center">2022/10/20 12:02:15</div>
          <span className="ml-[19px] w-[54px] whitespace-nowrap">Elapsed Time:</span>
          <div className="w-[54px] h-[17px] bg-black text-[#0fa00f] flex items-center justify-center">00:02:51</div>
        </div>
      </div>
      <div className="flex-1 flex items-center pl-[5px]">
        <Btn off className="w-[48px]">Start</Btn>
        <Btn className="w-[50px] ml-[5px]">Stop</Btn>
        <Btn className="w-[49px] ml-[20px]">Clear</Btn>
        <Btn className="w-[49px] ml-[5px]">Save</Btn>
        <Btn className="w-[49px] ml-[21px]">CPUID</Btn>
        <Btn className="w-[48px] ml-[5px]">Preferences</Btn>
        <Btn off className="w-[48px] ml-[119px]">Close</Btn>
      </div>
    </div>
  );
}

export default function App() {
  return (
    <div className="relative w-[1125px] h-[862px] overflow-hidden bg-white blur-[0.45px] [font-family:'Roboto','Noto_Sans_CJK_SC',sans-serif]">
      <MainWindow />
      <CpuZ />
      <Stability />
    </div>
  );
}
